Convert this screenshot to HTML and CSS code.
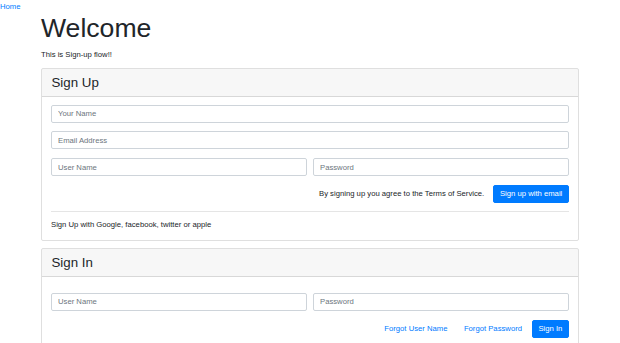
FILE: index.html
```html
<!DOCTYPE html>
<html lang="en">
<head>
  <meta charset="UTF-8" />
  <meta name="viewport" content="width=device-width, initial-scale=1.0"/>
  <title>Welcome</title>
  <link rel="stylesheet" href="styles.css">
</head>
<body>
  <a href="#" class="home-link">Home</a>

  <main class="container">
    <h1 class="page-title">Welcome</h1>
    <p class="lead-text">This is Sign-up flow!!</p>

    <!-- sign up -->
    <section class="card">
      <div class="card-header">
        <h3>Sign Up</h3>
      </div>
      <div class="card-body">
        <form>
          <div class="form-group">
            <input type="text" class="form-control" placeholder="Your Name" />
          </div>
          <div class="form-group">
            <input type="email" class="form-control" placeholder="Email Address" />
          </div>
          <div class="form-group form-row">
            <input type="text" class="form-control" placeholder="User Name" />
            <input type="password" class="form-control" placeholder="Password" />
          </div>
          <div class="actions">
            <span class="terms">By signing up you agree to the Terms of Service.</span>
            <button type="button" class="btn btn-primary">Sign up with email</button>
          </div>
        </form>
        <hr />
        <p class="social-text">Sign Up with Google, facebook, twitter or apple</p>
      </div>
    </section>

    <!-- sign in -->
    <section class="card">
      <div class="card-header">
        <h3>Sign In</h3>
      </div>
      <div class="card-body">
        <form class="signin-form">
          <div class="form-group form-row">
            <input type="text" class="form-control" placeholder="User Name" />
            <input type="password" class="form-control" placeholder="Password" />
          </div>
          <div class="actions actions-tight">
            <a href="#" class="btn btn-link">Forgot User Name</a>
            <a href="#" class="btn btn-link">Forgot Password</a>
            <button type="button" class="btn btn-primary">Sign In</button>
          </div>
        </form>
      </div>
    </section>
  </main>
</body>
</html>
```

FILE: styles.css
```css
* {
  margin: 0;
  padding: 0;
  box-sizing: border-box;
}

body {
  font-family: "Liberation Sans", Arial, sans-serif;
  font-size: 7.7px;
  line-height: 11.4px;
  color: #212529;
  background-color: #fff;
}

a {
  color: #007bff;
  text-decoration: none;
}

.home-link {
  display: block;
  width: max-content;
  padding-top: 0.5px;
}

.container {
  width: 538px;
  margin: 0 auto;
}

.page-title {
  font-size: 26.6px;
  font-weight: 300;
  line-height: 1.2;
  margin-top: 1.5px;
  margin-bottom: 3.8px;
}

.lead-text {
  margin-bottom: 7.6px;
}

.card {
  border: 1px solid rgba(0, 0, 0, 0.125);
  border-radius: 2px;
  margin-bottom: 7.6px;
  overflow: hidden;
}

.card-header {
  background-color: rgba(0, 0, 0, 0.03);
  border-bottom: 1px solid rgba(0, 0, 0, 0.125);
  padding: 5.7px 9.5px 5px;
}

.card-header h3 {
  font-size: 13.3px;
  font-weight: 400;
  line-height: 1.2;
}

.card-body {
  padding: 8px 9px 9.5px;
}

.form-group {
  margin-bottom: 8.7px;
}

.form-row {
  display: flex;
  gap: 6px;
}

.form-control {
  display: block;
  width: 100%;
  height: 18px;
  padding: 0 6px;
  font-family: inherit;
  font-size: 7.7px;
  color: #495057;
  background-color: #fff;
  border: 1px solid #ced4da;
  border-radius: 2px;
}

.form-control::placeholder {
  color: #6c757d;
}

.actions {
  display: flex;
  align-items: center;
  justify-content: flex-end;
  gap: 9px;
}

.actions-tight {
  gap: 3px;
}

.btn {
  display: inline-block;
  height: 18px;
  padding: 0 5.7px;
  font-family: inherit;
  font-size: 7.7px;
  line-height: 16px;
  border: 1px solid transparent;
  border-radius: 2px;
  cursor: pointer;
}

.btn-primary {
  color: #fff;
  background-color: #007bff;
  border-color: #007bff;
}

.btn-link {
  color: #007bff;
  background: none;
}

hr {
  border: 0;
  border-top: 1px solid rgba(0, 0, 0, 0.1);
  margin: 8px 0 7px;
}

.signin-form {
  padding-top: 8px;
}
```
